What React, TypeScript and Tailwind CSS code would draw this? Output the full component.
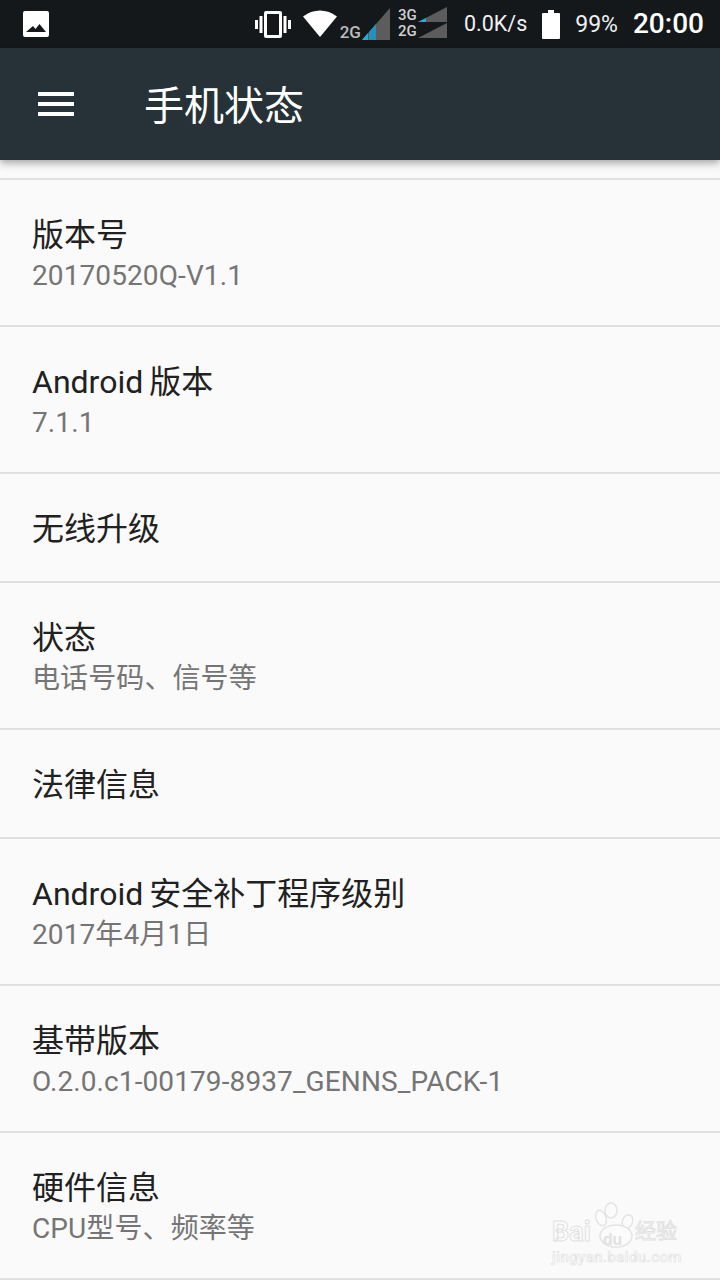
import React from "react";

const font = "font-['Roboto','Noto_Sans_CJK_SC',sans-serif]";

const rows = [
  { title: "版本号", sub: "20170520Q-V1.1" },
  { title: "Android 版本", sub: "7.1.1" },
  { title: "无线升级" },
  { title: "状态", sub: "电话号码、信号等" },
  { title: "法律信息" },
  { title: "Android 安全补丁程序级别", sub: "2017年4月1日" },
  { title: "基带版本", sub: "O.2.0.c1-00179-8937_GENNS_PACK-1" },
  { title: "硬件信息", sub: "CPU型号、频率等" },
];

const PictureIcon = () => (
  <svg width="26" height="26" viewBox="0 0 26 26">
    <path fillRule="evenodd" fill="#fff" d="M2 0h22a2 2 0 0 1 2 2v22a2 2 0 0 1-2 2H2a2 2 0 0 1-2-2V2a2 2 0 0 1 2-2zM3 21h20l-6.500-8-4 5-2.500-3z" />
  </svg>
);

const VibrateIcon = () => (
  <svg width="36" height="27" viewBox="0 0 36 27" fill="#fff">
    <path fillRule="evenodd" d="M11 0h14a2 2 0 0 1 2 2v23a2 2 0 0 1-2 2H11a2 2 0 0 1-2-2V2a2 2 0 0 1 2-2zm1 3v21h12V3z" />
    <rect x="0" y="9" width="3" height="9" />
    <rect x="4.500" y="5" width="3" height="17" />
    <rect x="28.500" y="5" width="3" height="17" />
    <rect x="33" y="9" width="3" height="9" />
  </svg>
);

const WifiIcon = () => (
  <svg width="34" height="27" viewBox="0 0 34 27" fill="#fff">
    <path d="M17 27 0 6.500C5 2.500 11 .500 17 .500S29 2.500 34 6.500z" />
  </svg>
);

const SignalMain = () => (
  <svg width="28" height="32" viewBox="0 0 28 32">
    <path fill="#5c5c5c" d="M28 0v32H0z" />
    <path fill="#29a9d8" d="M0 32l6-7v7z" />
    <path fill="#2391bd" d="M7 24l7-8v16H7z" />
  </svg>
);

const SignalTop = () => (
  <svg width="29" height="15" viewBox="0 0 29 15">
    <path fill="#5c5c5c" d="M29 0v15H0z" />
    <path fill="#29a9d8" d="M0 15l8-4v4z" />
  </svg>
);

const SignalBottom = () => (
  <svg width="29" height="15" viewBox="0 0 29 15">
    <path fill="#5c5c5c" d="M29 0v15H0z" />
  </svg>
);

const BatteryIcon = () => (
  <svg width="18" height="29" viewBox="0 0 18 29" fill="#fff">
    <path d="M6 0h6v3h5a1 1 0 0 1 1 1v24a1 1 0 0 1-1 1H1a1 1 0 0 1-1-1V4a1 1 0 0 1 1-1h5z" />
  </svg>
);

const StatusBar = () => (
  <div className="h-12 shrink-0 bg-[#14181b] flex items-center pl-[23px] pr-4 text-white">
    <PictureIcon />
    <div className="ml-auto flex items-center">
      <VibrateIcon />
      <div className="ml-[12px] -mt-[1px]"><WifiIcon /></div>
      <span className="ml-[3px] mt-[17px] text-[17px] leading-none font-medium text-[#bdbdbd]">2G</span>
      <div className="ml-[1px]"><SignalMain /></div>
      <div className="ml-[8px] -mt-[3px] flex flex-col gap-[1px] text-[15px] font-medium text-[#d0d0d0]">
        <div className="flex items-end gap-[3px]">
          <span className="w-[17px] leading-[14px] whitespace-nowrap">3G</span>
          <SignalTop />
        </div>
        <div className="flex items-end gap-[3px]">
          <span className="w-[17px] leading-[14px] whitespace-nowrap">2G</span>
          <SignalBottom />
        </div>
      </div>
      <span className="ml-[17px] text-[21.5px] leading-none text-[#f0f0f0]">0.0K/s</span>
      <div className="ml-[15px]"><BatteryIcon /></div>
      <span className="ml-[15px] text-[23px] leading-none text-[#f0f0f0]">99%</span>
      <span className="ml-[15px] text-[28px] leading-none font-medium">20:00</span>
    </div>
  </div>
);

const Toolbar = () => (
  <div className="relative z-10 h-28 shrink-0 bg-[#263238] flex items-center shadow-[0_3px_8px_rgba(0,0,0,0.35)]">
    <div className="ml-[38px] w-9 flex flex-col gap-[6px]">
      <div className="h-1 bg-white" />
      <div className="h-1 bg-white" />
      <div className="h-1 bg-white" />
    </div>
    <h1 className="ml-[70px] mt-[6px] text-[40px] leading-none font-normal text-white">手机状态</h1>
  </div>
);

const Row = ({ title, sub }: { title: string; sub?: string }) => (
  <div className={`${sub ? "h-[147px]" : "h-[109px]"} pt-[35px] border-b-2 border-[#e0e0e0] pl-8`}>
    <div className="text-[32px] leading-[40px] text-[#212121] [word-spacing:-2px]">{title}</div>
    {sub && <div className="mt-[1px] text-[28px] leading-[40px] tracking-[0.1px] text-[#757575]">{sub}</div>}
  </div>
);

const Watermark = () => (
  <div className="absolute left-[552px] top-[1201px] w-[130px] h-[72px] pointer-events-none">
    <svg className="absolute left-[40px] top-0" width="46" height="48" viewBox="0 0 46 48" fill="#fbfbfb" stroke="#e4e4e4" strokeWidth="1.500">
      <ellipse cx="9" cy="17" rx="5" ry="8" transform="rotate(-20 9 17)" />
      <ellipse cx="19" cy="9.500" rx="6" ry="7.500" />
      <ellipse cx="35.500" cy="20.500" rx="5" ry="7" transform="rotate(20 35.500 20.500)" />
      <ellipse cx="24" cy="35" rx="16" ry="11" />
    </svg>
    <span className="absolute left-0 top-[18px] text-[27px] leading-none font-bold text-[#fbfbfb] [-webkit-text-stroke:1px_#e2e2e2]">Bai</span>
    <span className="absolute left-[51px] top-[30px] text-[17px] leading-none font-bold text-[#e2e2e2]">du</span>
    <span className="absolute left-[83px] top-[20px] text-[21px] leading-none text-[#fbfbfb] [-webkit-text-stroke:1px_#e2e2e2]">经验</span>
    <span className="absolute left-0 top-[49px] text-[15px] leading-none font-medium tracking-[0.4px] text-[#fbfbfb] [-webkit-text-stroke:0.7px_#e4e4e4] whitespace-nowrap">jingyan.baidu.com</span>
  </div>
);

export default function App() {
  return (
    <div className={`${font} relative w-[720px] h-[1280px] overflow-hidden bg-[#fafafa] flex flex-col`}>
      <StatusBar />
      <Toolbar />
      <div className="mt-[18px] border-t-2 border-[#e0e0e0]">
        {rows.map((row) => (
          <Row key={row.title} title={row.title} sub={row.sub} />
        ))}
      </div>
      <Watermark />
    </div>
  );
}
